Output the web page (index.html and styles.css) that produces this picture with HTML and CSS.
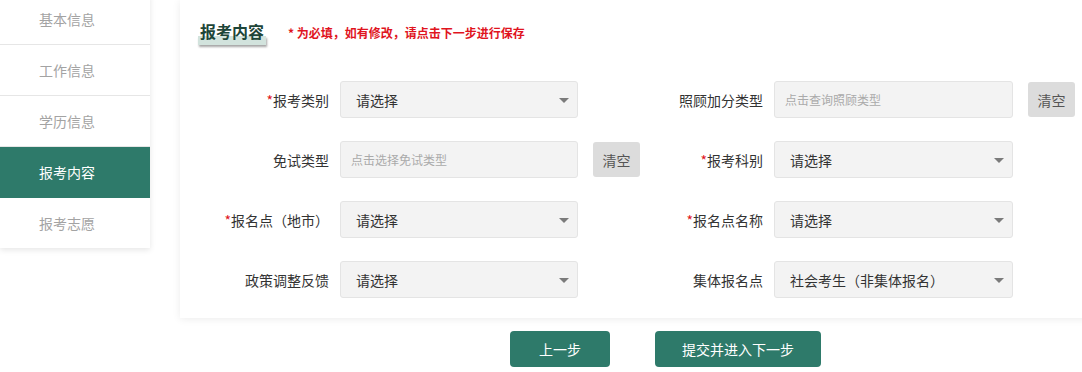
FILE: index.html
```html
<!DOCTYPE html>
<html lang="zh-CN">
<head>
<meta charset="utf-8">
<title>报考内容</title>
<link rel="stylesheet" href="styles.css">
</head>
<body>
<div class="page">
  <nav class="sidebar">
    <div class="nav-item">基本信息</div>
    <div class="nav-item">工作信息</div>
    <div class="nav-item">学历信息</div>
    <div class="nav-item active">报考内容</div>
    <div class="nav-item">报考志愿</div>
  </nav>
  <main class="main">
    <section class="panel">
      <div class="panel-head">
        <h2 class="title">报考内容</h2>
        <span class="note">* 为必填，如有修改，请点击下一步进行保存</span>
      </div>
      <div class="form">
        <label class="label"><i class="req">*</i>报考类别</label>
        <div class="select"><span>请选择</span><b class="caret"></b></div>
        <div class="cell"></div>
        <label class="label">照顾加分类型</label>
        <div class="select input"><span class="ph">点击查询照顾类型</span></div>
        <div class="cell"><button class="clear">清空</button></div>

        <label class="label">免试类型</label>
        <div class="select input"><span class="ph">点击选择免试类型</span></div>
        <div class="cell"><button class="clear">清空</button></div>
        <label class="label"><i class="req">*</i>报考科别</label>
        <div class="select"><span>请选择</span><b class="caret"></b></div>
        <div class="cell"></div>

        <label class="label"><i class="req">*</i>报名点（地市）</label>
        <div class="select"><span>请选择</span><b class="caret"></b></div>
        <div class="cell"></div>
        <label class="label"><i class="req">*</i>报名点名称</label>
        <div class="select"><span>请选择</span><b class="caret"></b></div>
        <div class="cell"></div>

        <label class="label">政策调整反馈</label>
        <div class="select"><span>请选择</span><b class="caret"></b></div>
        <div class="cell"></div>
        <label class="label">集体报名点</label>
        <div class="select"><span>社会考生（非集体报名）</span><b class="caret"></b></div>
        <div class="cell"></div>
      </div>
    </section>
    <div class="actions">
      <button class="btn prev">上一步</button>
      <button class="btn next">提交并进入下一步</button>
    </div>
  </main>
</div>
</body>
</html>
```

FILE: styles.css
```css
html, body {
  margin: 0;
  padding: 0;
  overflow: hidden;
  background: #fff;
  font-family: "Noto Sans CJK SC", "Microsoft YaHei", sans-serif;
  color: #333;
}

.page {
  display: flex;
  align-items: flex-start;
  gap: 30px;
  width: 1120px;
}

.sidebar {
  width: 150px;
  flex: none;
  margin-top: -6px;
  background: #fff;
  box-shadow: 0 2px 6px rgba(0, 0, 0, 0.10);
}

.nav-item {
  height: 50px;
  line-height: 50px;
  padding-left: 39px;
  font-size: 14px;
  color: #a3a3a3;
  border-bottom: 1px solid #e6e6e6;
}

.nav-item:last-child {
  border-bottom: none;
}

.nav-item.active {
  background: #2e7a6a;
  color: #fff;
  border-bottom-color: #2e7a6a;
}

.main {
  flex: 1;
  display: flex;
  flex-direction: column;
}

.panel {
  background: #fff;
  box-shadow: 0 1px 8px rgba(0, 0, 0, 0.08);
  padding: 20px 0 20px 0;
}

.panel-head {
  display: flex;
  align-items: baseline;
  gap: 24px;
  padding-left: 20px;
}

.title {
  position: relative;
  margin: 0;
  font-size: 16px;
  line-height: 22px;
  font-weight: bold;
  color: #1d4538;
  z-index: 0;
}

.title::after {
  content: "";
  position: absolute;
  left: -2px;
  right: -2px;
  bottom: -3px;
  height: 9px;
  background: #d2e3dd;
  box-shadow: 1px 2px 2px rgba(0, 0, 0, 0.35);
  z-index: -1;
}

.note {
  font-size: 12px;
  font-weight: bold;
  color: #e0141e;
}

.form {
  display: grid;
  grid-template-columns: 160px 238px 62px 134px 239px 62px;
  grid-auto-rows: 37px;
  row-gap: 23px;
  margin-top: 39px;
}

.label {
  display: flex;
  align-items: center;
  justify-content: flex-end;
  padding-right: 11px;
  font-size: 14px;
  color: #333;
  white-space: nowrap;
}

.req {
  font-style: normal;
  color: #e0141e;
}

.select {
  position: relative;
  display: flex;
  align-items: center;
  box-sizing: border-box;
  padding-left: 15px;
  background: #f3f3f3;
  border: 1px solid #e4e4e4;
  border-radius: 3px;
  font-size: 14px;
  color: #333;
}

.select.input {
  padding-left: 10px;
}

.ph {
  font-size: 12px;
  color: #aaa;
}

.caret {
  position: absolute;
  right: 8px;
  top: 16px;
  width: 0;
  height: 0;
  border-left: 5px solid transparent;
  border-right: 5px solid transparent;
  border-top: 5px solid #7b7b7b;
}

.cell {
  display: flex;
  align-items: center;
  justify-content: flex-end;
}

.clear {
  width: 47px;
  height: 35px;
  border: none;
  border-radius: 3px;
  background: #dcdcdc;
  color: #555;
  font-family: inherit;
  font-size: 14px;
  padding: 0;
}

.actions {
  display: flex;
  gap: 45px;
  padding-left: 330px;
  margin-top: 13px;
}

.btn {
  height: 36px;
  border: none;
  border-radius: 4px;
  background: #2e7a6a;
  color: #fff;
  font-family: inherit;
  font-size: 14px;
  padding: 0;
}

.btn.prev {
  width: 100px;
}

.btn.next {
  width: 166px;
}
```
